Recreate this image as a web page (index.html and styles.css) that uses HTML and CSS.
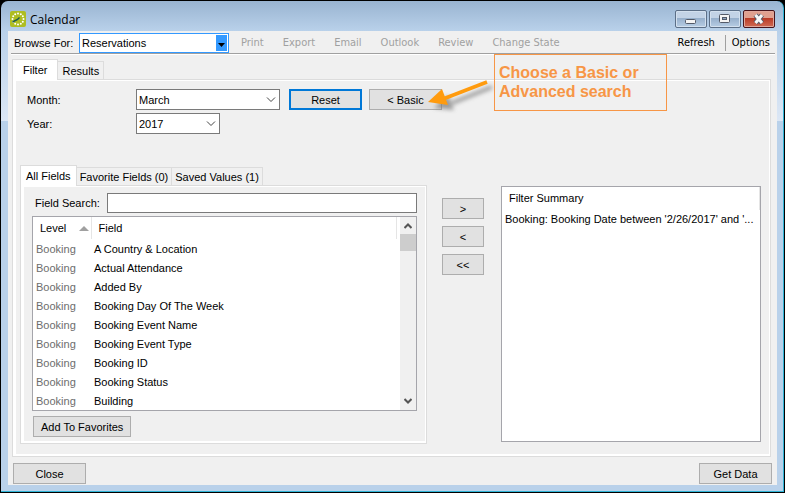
FILE: index.html
```html
<!DOCTYPE html>
<html lang="en">
<head>
<meta charset="utf-8">
<title>Calendar</title>
<link rel="stylesheet" href="styles.css">
</head>
<body>
<div class="window">
  <header class="titlebar">
    <svg class="app-icon" viewBox="0 0 16 16" aria-hidden="true">
      <rect width="16" height="16" rx="2" fill="#aebd22"/>
      <g fill="#fff"><circle cx="8" cy="2.5" r="1"/><circle cx="10.8" cy="3.2" r="1"/><circle cx="12.8" cy="5.2" r="1"/><circle cx="13.5" cy="8" r="1"/><circle cx="12.8" cy="10.8" r="1"/><circle cx="10.8" cy="12.8" r="1"/><circle cx="8" cy="13.5" r="1"/><circle cx="5.2" cy="12.8" r="1"/><circle cx="3.2" cy="10.8" r="1"/><circle cx="2.5" cy="8" r="1"/><circle cx="3.2" cy="5.2" r="1"/><circle cx="5.2" cy="3.2" r="1"/></g>
      <path d="M2.500 11L7.500 8.500 9.500 6.500" fill="none" stroke="#1d5a50" stroke-width="1.5"/>
    </svg>
    <h1>Calendar</h1>
    <div class="window-buttons">
      <button type="button" aria-label="Minimize"><svg viewBox="1 1 30 16"><rect x="10.500" y="9.500" width="10" height="4" rx="1" fill="#f4f4f4" stroke="#535a68"/></svg></button>
      <button type="button" aria-label="Maximize"><svg viewBox="1 1 30 16"><rect x="10.500" y="4.500" width="10" height="8" rx="1" fill="#f4f4f4" stroke="#535a68"/><rect x="13.500" y="7.500" width="4" height="2" fill="#8ea6c2" stroke="#535a68"/></svg></button>
      <button type="button" class="close" aria-label="Close window"><svg viewBox="1 1 30 16"><path d="M12.500 5l6.500 8M19 5l-6.500 8" stroke="#535a68" stroke-width="5"/><path d="M12.500 5l6.500 8M19 5l-6.500 8" stroke="#f8f8f8" stroke-width="3"/></svg></button>
    </div>
  </header>

  <main class="client">
    <div class="toolbar">
      <label for="browse">Browse For:</label>
      <span class="combo combo-browse">
        <select id="browse"><option>Reservations</option></select>
        <svg viewBox="0 0 11 16" aria-hidden="true"><rect width="11" height="16" fill="#3399ff"/><path d="M2 8h7l-3.500 4z" fill="#000"/></svg>
      </span>
      <div class="actions">
        <button type="button" disabled>Print</button>
        <button type="button" disabled>Export</button>
        <button type="button" disabled>Email</button>
        <button type="button" disabled>Outlook</button>
        <button type="button" disabled>Review</button>
        <button type="button" disabled>Change State</button>
      </div>
      <div class="links">
        <button type="button">Refresh</button>
        <button type="button">Options</button>
      </div>
    </div>

    <div class="tabs">
      <button type="button" class="tab active">Filter</button>
      <button type="button" class="tab">Results</button>
    </div>
    <section class="panel outer">
      <form class="period">
        <label for="month">Month:</label>
        <div class="row">
          <span class="combo combo-month">
            <select id="month"><option>March</option></select>
            <svg viewBox="0 0 10 6" aria-hidden="true"><path d="M1 .5l4 4 4-4" fill="none" stroke="#444"/></svg>
          </span>
          <button type="button" class="btn primary">Reset</button>
          <button type="button" class="btn">&lt; Basic</button>
        </div>
        <label for="year">Year:</label>
        <div class="row">
          <span class="combo combo-year">
            <select id="year"><option>2017</option></select>
            <svg viewBox="0 0 10 6" aria-hidden="true"><path d="M1 .5l4 4 4-4" fill="none" stroke="#444"/></svg>
          </span>
        </div>
      </form>

      <div class="columns">
        <div class="fields">
          <div class="tabs">
            <button type="button" class="tab active">All Fields</button>
            <button type="button" class="tab">Favorite Fields (0)</button>
            <button type="button" class="tab">Saved Values (1)</button>
          </div>
          <div class="panel inner">
            <div class="search">
              <label for="search">Field Search:</label>
              <input id="search" type="text">
            </div>
            <div class="list">
              <table>
                <thead><tr><th>Level <svg viewBox="0 0 10 5" aria-hidden="true"><path d="M5 0l5 5H0z" fill="#a0a0a0"/></svg></th><th>Field</th></tr></thead>
                <tbody>
                  <tr><td>Booking</td><td>A Country &amp; Location</td></tr>
                  <tr><td>Booking</td><td>Actual Attendance</td></tr>
                  <tr><td>Booking</td><td>Added By</td></tr>
                  <tr><td>Booking</td><td>Booking Day Of The Week</td></tr>
                  <tr><td>Booking</td><td>Booking Event Name</td></tr>
                  <tr><td>Booking</td><td>Booking Event Type</td></tr>
                  <tr><td>Booking</td><td>Booking ID</td></tr>
                  <tr><td>Booking</td><td>Booking Status</td></tr>
                  <tr><td>Booking</td><td>Building</td></tr>
                </tbody>
              </table>
              <div class="scrollbar" aria-hidden="true">
                <svg viewBox="0 0 8 6"><path d="M.5 5L4 1.500 7.500 5" fill="none" stroke="#555" stroke-width="2"/></svg>
                <span class="thumb"></span>
                <svg viewBox="0 0 8 6"><path d="M.5 1L4 4.500 7.500 1" fill="none" stroke="#555" stroke-width="2"/></svg>
              </div>
            </div>
            <button type="button" class="btn favorite">Add To Favorites</button>
          </div>
        </div>

        <div class="movers">
          <button type="button" class="btn">&gt;</button>
          <button type="button" class="btn">&lt;</button>
          <button type="button" class="btn">&lt;&lt;</button>
        </div>

        <div class="summary">
          <h2>Filter Summary</h2>
          <p>Booking: Booking Date between '2/26/2017' and '...</p>
        </div>
      </div>
    </section>

    <footer class="footer">
      <button type="button" class="btn">Close</button>
      <button type="button" class="btn">Get Data</button>
    </footer>
    <p class="callout">Choose a Basic or Advanced search</p>
    <svg class="pointer" viewBox="0 0 70 40" aria-hidden="true">
      <g class="shadow"><path d="M62 8L22 24" stroke="#777" stroke-width="4"/><path d="M4 29l14-13 6 15z" fill="#777"/></g>
      <path d="M62 8L18 25" stroke="#ff9b0e" stroke-width="3.500"/><path d="M3 28l14-13 6 16z" fill="#ff9b0e"/>
    </svg>
  </main>
</div>
</body>
</html>
```
FILE: styles.css
```css
* { box-sizing: border-box; }

body {
  margin: 0;
  background: #000;
  color: #000;
  font: 11px/16px "Liberation Sans", Arial, sans-serif;
}

button, select, input { font: inherit; color: inherit; margin: 0; }
h1, h2, p { margin: 0; font-weight: normal; }

.window {
  display: flex;
  flex-direction: column;
  min-height: calc(100vh - 2px);
  margin: 1px;
  padding: 0 6px 6px 7px;
  border: solid #2fb4d6;
  border-width: 0 1px 1px 0;
  border-radius: 7px 7px 0 0;
  background:
    linear-gradient(#99b4d1, #b9d1ea 30px, #dce7f5 120px, #b9d1ea 120px);
}

.titlebar { display: flex; align-items: center; height: 30px; padding: 6px 2px 0; }
.app-icon { width: 16px; height: 16px; }
.titlebar h1 { margin-left: 4px; padding-top: 1px; font: 12px/16px "Open Sans", sans-serif; }
.window-buttons { display: flex; gap: 2px; margin-left: auto; }
.window-buttons button {
  width: 32px;
  height: 18px;
  padding: 0;
  border: 1px solid #5c6f87;
  border-radius: 2px;
  background: linear-gradient(#c3d3e6 45%, #96afcb 45%, #b7cde4);
  box-shadow: inset 0 0 0 1px #d3e0ee;
}
.window-buttons svg { display: block; width: 30px; height: 16px; }
.window-buttons .close {
  border-color: #47141b;
  background: linear-gradient(#e0a08f 45%, #b93a25 45%, #d06c55);
  box-shadow: inset 0 0 0 1px #e0a79b;
}

.client { position: relative; flex: 1; display: flex; flex-direction: column; background: #f0f0f0; }

.toolbar {
  display: flex;
  align-items: center;
  height: 23px;
  margin: 0 2px 0 3px;
  padding: 2px 5px 0 3px;
  border-bottom: 1px solid #a0a0a0;
  box-shadow: 0 1px #fff;
}
.toolbar label { width: 65px; }

.combo { position: relative; display: block; }
.combo select {
  appearance: none;
  display: block;
  width: 100%;
  height: 21px;
  padding: 0 2px;
  border: 1px solid #7a7a7a;
  border-radius: 0;
  background: #fff;
}
.combo svg { position: absolute; right: 4px; top: 8px; width: 10px; height: 6px; pointer-events: none; }
.combo-browse { width: 150px; }
.combo-browse select { height: 20px; border-color: #3399ff; }
.combo-browse svg { right: 2px; top: 2px; width: 11px; height: 16px; }
.combo-month { width: 144px; }
.combo-year { width: 84px; }

.actions, .links { display: flex; font: 11px/16px "DejaVu Sans Condensed", "DejaVu Sans", sans-serif; }
.actions { gap: 19px; margin-left: 12px; color: #a0a0a0; }
.links { margin-left: auto; }
.actions button, .links button { padding: 0; border: 0; background: none; }
.links button + button { margin-left: 10px; padding-left: 6px; border-left: 1px solid #a0a0a0; }

.tabs { z-index: 1; display: flex; align-items: flex-end; height: 21px; }
.client > .tabs { margin: 5px 4px -1px; }
.fields > .tabs { margin-bottom: -1px; }
.tab { height: 18px; margin-bottom: 1px; padding: 0 4px; border: 1px solid #dcdcdc; border-bottom: 0; border-left: 0; background: #f0f0f0; }
.tab.active { height: 21px; margin-bottom: 0; padding: 0 10px 1px; border-left: 1px solid #dcdcdc; background: #fff; }
.fields .tab { padding: 0 3px; }
.fields .tab.active { padding: 0 5px 1px; }

.panel { border: 1px solid #dcdcdc; box-shadow: inset 3px 1px #fff, inset -1px -2px #fff; }
.outer { flex: 1; display: flex; flex-direction: column; margin: 0 6px 0 4px; padding: 9px 9px 12px 7px; }

.period { display: grid; grid-template-columns: 109px 1fr; row-gap: 3px; align-items: center; padding-left: 7px; }
.row { display: flex; gap: 7px; }
.btn { height: 21px; min-width: 73px; padding: 0 7px; border: 1px solid #adadad; background: #e1e1e1; line-height: 16px; }
.row .combo-month { margin-right: 2px; }
.primary { border: 2px solid #0078d7; }

.columns { flex: 1; display: grid; grid-template-columns: minmax(0, 407fr) 74px minmax(0, 260fr); margin-top: 31px; }
.fields { display: flex; flex-direction: column; }
.inner { flex: 1; padding: 7px 9px 6px 11px; }
.search { display: flex; align-items: center; }
.search label { width: 75px; padding-left: 3px; }
.search input { flex: 1; min-width: 0; height: 20px; border: 1px solid #7a7a7a; background: #fff; }
.list { display: flex; margin-top: 3px; border: 1px solid #a5a5ab; background: #fff; }
.list table { flex: 1; border-collapse: collapse; table-layout: fixed; }
.list th, .list td { height: 19px; padding: 0 3px; text-align: left; font-weight: normal; }
.list th { height: 22px; padding: 0 7px; border-right: 1px solid #e5e5e5; }
.list th:first-child { width: 58px; padding-right: 2px; }
.list th svg { float: right; width: 10px; height: 5px; margin-top: 6px; }
.list td:first-child { color: #6d6d6d; }
.scrollbar { display: flex; flex-direction: column; align-items: center; width: 16px; margin-left: 3px; padding: 6px 0; background: #f0f0f0; }
.scrollbar svg { width: 8px; height: 6px; }
.thumb { width: 16px; height: 17px; margin: 5px 0 auto; background: #cdcdcd; }
.favorite { min-width: 98px; margin: 5px 0 0 1px; }

.movers { display: flex; flex-direction: column; gap: 7px; padding: 33px 17px 0 15px; }
.movers .btn { min-width: 0; }
.summary { margin: 21px 0 2px; border: 1px solid #a5a5ab; background: #fff; }
.summary h2 { height: 23px; padding-left: 7px; border-right: 1px solid #e5e5e5; font-size: 11px; line-height: 23px; }
.summary p { padding: 1px 3px; }

.footer { display: flex; justify-content: space-between; padding: 6px 5px 1px; }

.callout {
  position: absolute;
  left: 486px;
  top: 23px;
  width: 173px;
  height: 57px;
  padding: 8px 4px;
  border: 1px solid #f79646;
  color: #f79646;
  font-size: 16px;
  font-weight: bold;
  line-height: 19px;
}
.pointer { position: absolute; left: 417px; top: 43px; width: 70px; height: 40px; pointer-events: none; }
.shadow { transform: translate(5px, 5px); filter: blur(2px); opacity: .7; }
```
